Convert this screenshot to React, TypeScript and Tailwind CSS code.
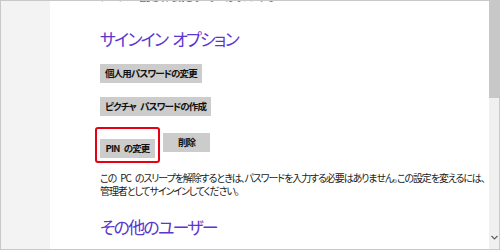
const JP = "font-['Segoe_UI','Noto_Sans_CJK_JP',sans-serif] [font-feature-settings:'palt']";

function GrayButton({ label, className = '' }: { label: string; className?: string }) {
  return (
    <button
      className={`h-[19px] px-[5px] bg-[#cccccc] text-[9.5px] leading-[19px] font-bold text-[#111] tracking-[-0.9px] [word-spacing:3px] whitespace-nowrap ${className}`}
    >
      {label}
    </button>
  );
}

export default function App() {
  return (
    <div className={`w-[500px] h-[250px] border border-[#c8c8c8] flex overflow-hidden bg-white ${JP}`}>
      {/* left pane */}
      <div className="w-[49px] shrink-0 bg-[#f3f3f3]" />

      {/* settings content */}
      <div className="flex-1 overflow-hidden pl-[50px] flex flex-col items-start">
        <p className="-mt-[11px] text-[10px] leading-[14px] text-[#6b4ad8] tracking-[-1px] whitespace-nowrap">
          アカウント設定の同期をオンまたはオフにする
        </p>

        <h2 className="mt-[24px] text-[17px] leading-[22px] font-normal text-[#5b36cf] tracking-[-1.8px] [word-spacing:3px] whitespace-nowrap">
          サインイン オプション
        </h2>

        <GrayButton label="個人用パスワードの変更" className="mt-[14px]" />
        <GrayButton label="ピクチャ パスワードの作成" className="mt-[14px]" />

        <div className="mt-[17px] flex gap-[8px]">
          <div className="relative">
            <GrayButton label="PIN の変更" className="w-[55px]" />
            {/* highlight annotation */}
            <div className="absolute -left-[5px] -top-[6px] -right-[5px] -bottom-[5px] border-2 border-[#e60012] rounded-[3px]" />
          </div>
          <GrayButton label="削除" className="w-[47px]" />
        </div>

        <div className="mt-[13px] text-[10px] leading-[13px] text-[#222] tracking-[-1.1px] [word-spacing:3px] whitespace-nowrap flex flex-col">
          <span>この PC のスリープを解除するときは、パスワードを入力する必要はありません。この設定を変えるには、</span>
          <span>管理者としてサインインしてください。</span>
        </div>

        <h2 className="mt-[19px] text-[17px] leading-[22px] font-normal text-[#5b36cf] tracking-[-1.8px] whitespace-nowrap">
          その他のユーザー
        </h2>
      </div>

      {/* scrollbar */}
      <div className="w-[10px] shrink-0 flex flex-col">
        <div className="h-[97px] bg-[#c8c8c8]" />
        <div className="flex-1 bg-[#f0f0f0] flex flex-col justify-end items-center pb-[9px]">
          <svg width="7" height="5" viewBox="0 0 7 5" fill="none">
            <path d="M0.5 1 L3.5 4 L6.5 1" stroke="#606060" strokeWidth="1.2" />
          </svg>
        </div>
      </div>
    </div>
  );
}
